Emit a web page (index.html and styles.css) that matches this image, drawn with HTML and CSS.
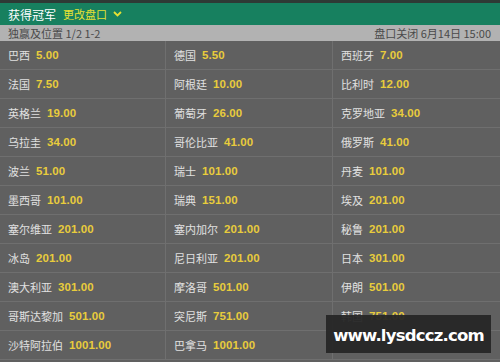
FILE: index.html
```html
<!DOCTYPE html>
<html>
<head>
<meta charset="utf-8">
<link rel="stylesheet" href="styles.css">
</head>
<body>
<div class="page">
  <div class="topline"></div>
  <div class="header">
    <span class="title">获得冠军</span>
    <span class="change">更改盘口</span>
    <svg class="chev" width="9" height="6" viewBox="0 0 9 6"><path d="M1 1 L4.5 4.5 L8 1" fill="none" stroke="#e6e033" stroke-width="1.8"/></svg>
  </div>
  <div class="sub">
    <span>独赢及位置 1/2 1-2</span>
    <span>盘口关闭 6月14日 15:00</span>
  </div>
  <div class="grid">
    <div class="cell"><span class="team">巴西</span><span class="odd">5.00</span></div>
    <div class="cell"><span class="team">德国</span><span class="odd">5.50</span></div>
    <div class="cell"><span class="team">西班牙</span><span class="odd">7.00</span></div>
    <div class="cell"><span class="team">法国</span><span class="odd">7.50</span></div>
    <div class="cell"><span class="team">阿根廷</span><span class="odd">10.00</span></div>
    <div class="cell"><span class="team">比利时</span><span class="odd">12.00</span></div>
    <div class="cell"><span class="team">英格兰</span><span class="odd">19.00</span></div>
    <div class="cell"><span class="team">葡萄牙</span><span class="odd">26.00</span></div>
    <div class="cell"><span class="team">克罗地亚</span><span class="odd">34.00</span></div>
    <div class="cell"><span class="team">乌拉圭</span><span class="odd">34.00</span></div>
    <div class="cell"><span class="team">哥伦比亚</span><span class="odd">41.00</span></div>
    <div class="cell"><span class="team">俄罗斯</span><span class="odd">41.00</span></div>
    <div class="cell"><span class="team">波兰</span><span class="odd">51.00</span></div>
    <div class="cell"><span class="team">瑞士</span><span class="odd">101.00</span></div>
    <div class="cell"><span class="team">丹麦</span><span class="odd">101.00</span></div>
    <div class="cell"><span class="team">墨西哥</span><span class="odd">101.00</span></div>
    <div class="cell"><span class="team">瑞典</span><span class="odd">151.00</span></div>
    <div class="cell"><span class="team">埃及</span><span class="odd">201.00</span></div>
    <div class="cell"><span class="team">塞尔维亚</span><span class="odd">201.00</span></div>
    <div class="cell"><span class="team">塞内加尔</span><span class="odd">201.00</span></div>
    <div class="cell"><span class="team">秘鲁</span><span class="odd">201.00</span></div>
    <div class="cell"><span class="team">冰岛</span><span class="odd">201.00</span></div>
    <div class="cell"><span class="team">尼日利亚</span><span class="odd">201.00</span></div>
    <div class="cell"><span class="team">日本</span><span class="odd">301.00</span></div>
    <div class="cell"><span class="team">澳大利亚</span><span class="odd">301.00</span></div>
    <div class="cell"><span class="team">摩洛哥</span><span class="odd">501.00</span></div>
    <div class="cell"><span class="team">伊朗</span><span class="odd">501.00</span></div>
    <div class="cell"><span class="team">哥斯达黎加</span><span class="odd">501.00</span></div>
    <div class="cell"><span class="team">突尼斯</span><span class="odd">751.00</span></div>
    <div class="cell"><span class="team">韩国</span><span class="odd">751.00</span></div>
    <div class="cell"><span class="team">沙特阿拉伯</span><span class="odd">1001.00</span></div>
    <div class="cell"><span class="team">巴拿马</span><span class="odd">1001.00</span></div>
    <div class="cell"><span class="team"></span><span class="odd"></span></div>
  </div>
  <div class="watermark">www.lysdccz.com</div>
</div>
</body>
</html>
```
FILE: styles.css
```css
html, body {
  margin: 0;
  padding: 0;
  background: #606060;
}
.page {
  position: relative;
  width: 500px;
  height: 362px;
  overflow: hidden;
  font-family: "Noto Sans CJK SC", "DejaVu Sans", sans-serif;
  font-size: 11px;
}
.topline {
  height: 3px;
  background: #2e3a35;
}
.header {
  height: 22px;
  background: #17805f;
  display: flex;
  align-items: center;
  padding-left: 8px;
}
.title {
  color: #ffffff;
  font-size: 12px;
  margin-right: 7px;
}
.change {
  color: #e6e033;
  font-size: 11px;
  margin-right: 6px;
}
.chev {
  display: block;
}
.sub {
  height: 16px;
  background: #b2b2b2;
  color: #4a4a4a;
  display: flex;
  justify-content: space-between;
  align-items: center;
  padding: 0 9px 0 8px;
  line-height: 16px;
  font-size: 11px;
}
.grid {
  display: grid;
  grid-template-columns: 166px 167px 167px;
}
.cell {
  height: 28px;
  border-bottom: 1px solid #6f6f6f;
  border-right: 1px solid #6f6f6f;
  display: flex;
  align-items: center;
  padding-left: 8px;
  background: #606060;
}
.cell:nth-child(3n) {
  border-right: none;
}
.team {
  color: #e0e0e0;
  font-size: 11px;
  margin-right: 6px;
}
.odd {
  color: #e8cc3c;
  font-family: "Liberation Sans", sans-serif;
  font-weight: bold;
  font-size: 11.5px;
  letter-spacing: 0.1px;
}
.watermark {
  position: absolute;
  left: 326px;
  top: 315px;
  width: 165px;
  height: 38px;
  background: rgba(38, 38, 38, 0.95);
  color: #ffffff;
  font-family: "DejaVu Sans", sans-serif;
  font-weight: bold;
  font-size: 16.5px;
  letter-spacing: -0.8px;
  display: flex;
  align-items: center;
  justify-content: center;
  padding-top: 3px;
  box-sizing: border-box;
}
```
